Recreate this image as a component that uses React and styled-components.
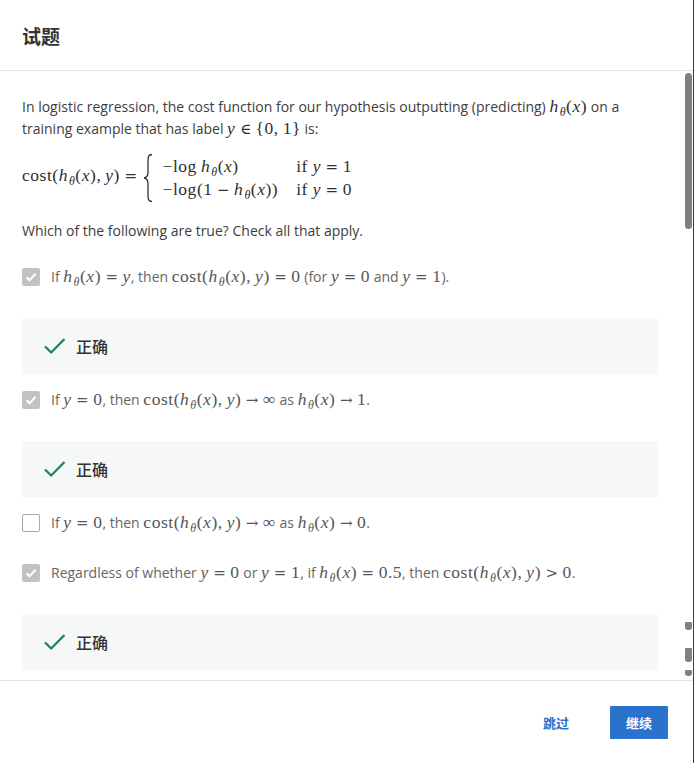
import React from "react";
import styled, { createGlobalStyle } from "styled-components";

const GlobalStyle = createGlobalStyle`
  html, body { margin: 0; padding: 0; background: #fff; }
  body { font-family: "Open Sans", "Noto Sans CJK SC", sans-serif; }
  * { box-sizing: border-box; }
`;

const Root = styled.div`
  width: 694px;
  height: 763px;
  border-right: 1px solid #3a3a3a;
  display: flex;
  flex-direction: column;
  background: #fff;
`;

const Header = styled.header`
  height: 71px;
  flex: none;
  display: flex;
  align-items: center;
  padding: 0 22px;
  border-bottom: 1px solid #e2e2e2;
`;

const Title = styled.h1`
  margin: 0;
  font-family: "Noto Sans CJK SC", sans-serif;
  font-size: 19px;
  font-weight: 700;
  color: #333;
`;

const Body = styled.main`
  flex: 1;
  position: relative;
  overflow: hidden;
`;

const Content = styled.div`
  padding: 25px 35px 0 22px;
`;

const ScrollThumb = styled.div`
  position: absolute;
  right: 1px;
  top: ${(p) => p.$top}px;
  width: 7px;
  height: ${(p) => p.$h}px;
  background: #808080;
  border-radius: ${(p) => (p.$glitch ? "1px 1px 3px 3px" : "4px")};
`;

const Para = styled.p`
  margin: 0 0 ${(p) => p.$mb || 0}px;
  font-size: 14px;
  line-height: 22px;
  color: #3d3d3d;
`;

const Mth = styled.span`
  font-family: "Liberation Serif", "Times New Roman", serif;
  font-size: 17.5px;
  line-height: 0;
  letter-spacing: 0.03em;
  white-space: nowrap;
  color: #2f2f2f;
`;

const V = styled.i`
  font-style: italic;
`;

const Sb = styled.span`
  font-size: 12px;
  vertical-align: -4px;
  line-height: 0;
  margin-left: 1px;
`;

const Rel = styled.span`
  font-family: "DejaVu Serif", serif;
  font-size: 15px;
  line-height: 0;
  margin: 0 0.3em;
  letter-spacing: 0;
`;

const Formula = styled.div`
  display: flex;
  align-items: center;
  height: 50px;
  margin: 13px 0 17px;
`;

const Brace = styled.svg`
  margin: 0 2px 0 1px;
  flex: none;
`;

const Cases = styled.div`
  display: grid;
  grid-template-columns: auto auto;
  column-gap: 18px;
  row-gap: 2px;
  margin-left: 8px;
  line-height: 21px;
`;

const OptionBlock = styled.div`
  margin-bottom: ${(p) => (p.$feedback ? "0" : "26px")};
`;

const OptionRow = styled.div`
  display: flex;
  align-items: center;
  height: 24px;
  gap: 11px;
  font-size: 14px;
  line-height: 22px;
  color: #666;
  white-space: nowrap;
  & ${Mth} { color: #555; }
`;

const Box = styled.span`
  width: 18px;
  height: 18px;
  flex: none;
  border-radius: 2px;
  display: inline-flex;
  align-items: center;
  justify-content: center;
  background: ${(p) => (p.$checked ? "#c2c2c2" : "#fff")};
  border: ${(p) => (p.$checked ? "none" : "1.5px solid #a8a8a8")};
`;

const Feedback = styled.div`
  height: 56px;
  margin: 29px 0 14px;
  background: #f5f8f7;
  display: flex;
  align-items: center;
  padding-left: 22px;
  gap: 10px;
`;

const FeedbackText = styled.span`
  font-family: "Noto Sans CJK SC", sans-serif;
  font-size: 16px;
  font-weight: 500;
  color: #333;
`;

const Footer = styled.footer`
  height: 83px;
  flex: none;
  border-top: 1px solid #e2e2e2;
  display: flex;
  align-items: center;
  justify-content: flex-end;
  padding-right: 25px;
`;

const SkipLink = styled.a`
  font-family: "Noto Sans CJK SC", sans-serif;
  font-size: 13px;
  font-weight: 700;
  color: #2a73cc;
  text-decoration: none;
  margin-right: 41px;
  cursor: pointer;
`;

const PrimaryButton = styled.button`
  height: 33px;
  width: 58px;
  border: none;
  border-radius: 1px;
  background: #2a73cc;
  color: #fff;
  font-family: "Noto Sans CJK SC", sans-serif;
  font-size: 13px;
  font-weight: 700;
  cursor: pointer;
`;

const H = () => (
  <>
    <V>h</V>
    <Sb>
      <V>θ</V>
    </Sb>
    (<V>x</V>)
  </>
);

const Cost = () => (
  <>
    cost(
    <H />,&thinsp;<V>y</V>)
  </>
);

const CheckBox = ({ checked }) => (
  <Box $checked={checked}>
    {checked && (
      <svg width="14" height="14" viewBox="0 0 14 14">
        <path d="M2.5 7.2 L5.6 10.2 L11.6 3.8" stroke="#fff" strokeWidth="2" fill="none" />
      </svg>
    )}
  </Box>
);

const Correct = () => (
  <Feedback>
    <svg width="22" height="18" viewBox="0 0 22 18">
      <path d="M1 9.5 L7.2 15.5 L20.5 2" stroke="#1f8354" strokeWidth="2.3" fill="none" />
    </svg>
    <FeedbackText>正确</FeedbackText>
  </Feedback>
);

const Option = ({ checked, feedback, children }) => (
  <OptionBlock $feedback={feedback}>
    <OptionRow>
      <CheckBox checked={checked} />
      <span>{children}</span>
    </OptionRow>
    {feedback && <Correct />}
  </OptionBlock>
);

export default function App() {
  return (
    <>
      <GlobalStyle />
      <Root>
        <Header>
          <Title>试题</Title>
        </Header>
        <Body>
          <Content>
            <Para>
              In logistic regression, the cost function for our hypothesis outputting (predicting){" "}
              <Mth>
                <H />
              </Mth>{" "}
              on a
              <br />
              training example that has label{" "}
              <Mth>
                <V>y</V>
                <Rel>∈</Rel>
                {"{"}0,&thinsp;1{"}"}
              </Mth>{" "}
              is:
            </Para>
            <Formula>
              <Mth>
                <Cost />
                <Rel>=</Rel>
              </Mth>
              <Brace width="10" height="50" viewBox="0 0 10 50">
                <path
                  d="M9 1.5 C5.6 1.8 5 3.5 5 8 L5 19 C5 23 3.5 24.6 1 25 C3.5 25.4 5 27 5 31 L5 42 C5 46.5 5.6 48.2 9 48.5"
                  stroke="#333"
                  strokeWidth="1.3"
                  fill="none"
                />
              </Brace>
              <Mth>
                <Cases>
                  <span>
                    −log&thinsp;
                    <H />
                  </span>
                  <span>
                    if <V>y</V>
                    <Rel>=</Rel>1
                  </span>
                  <span>
                    −log(1<Rel>−</Rel>
                    <H />)
                  </span>
                  <span>
                    if <V>y</V>
                    <Rel>=</Rel>0
                  </span>
                </Cases>
              </Mth>
            </Formula>
            <Para $mb={23}>Which of the following are true? Check all that apply.</Para>

            <Option checked feedback>
              If{" "}
              <Mth>
                <H />
                <Rel>=</Rel>
                <V>y</V>
              </Mth>
              , then{" "}
              <Mth>
                <Cost />
                <Rel>=</Rel>0
              </Mth>{" "}
              (for{" "}
              <Mth>
                <V>y</V>
                <Rel>=</Rel>0
              </Mth>{" "}
              and{" "}
              <Mth>
                <V>y</V>
                <Rel>=</Rel>1
              </Mth>
              ).
            </Option>

            <Option checked feedback>
              If{" "}
              <Mth>
                <V>y</V>
                <Rel>=</Rel>0
              </Mth>
              , then{" "}
              <Mth>
                <Cost />
                <Rel>→</Rel>∞
              </Mth>{" "}
              as{" "}
              <Mth>
                <H />
                <Rel>→</Rel>1
              </Mth>
              .
            </Option>

            <Option>
              If{" "}
              <Mth>
                <V>y</V>
                <Rel>=</Rel>0
              </Mth>
              , then{" "}
              <Mth>
                <Cost />
                <Rel>→</Rel>∞
              </Mth>{" "}
              as{" "}
              <Mth>
                <H />
                <Rel>→</Rel>0
              </Mth>
              .
            </Option>

            <Option checked feedback>
              Regardless of whether{" "}
              <Mth>
                <V>y</V>
                <Rel>=</Rel>0
              </Mth>{" "}
              or{" "}
              <Mth>
                <V>y</V>
                <Rel>=</Rel>1
              </Mth>
              , if{" "}
              <Mth>
                <H />
                <Rel>=</Rel>0.5
              </Mth>
              , then{" "}
              <Mth>
                <Cost />
                <Rel>&gt;</Rel>0
              </Mth>
              .
            </Option>
          </Content>
          <ScrollThumb $top={2} $h={156} />
          <ScrollThumb $glitch $top={551} $h={8} />
          <ScrollThumb $glitch $top={577} $h={14} />
          <ScrollThumb $glitch $top={599} $h={6} />
        </Body>
        <Footer>
          <SkipLink>跳过</SkipLink>
          <PrimaryButton>继续</PrimaryButton>
        </Footer>
      </Root>
    </>
  );
}
